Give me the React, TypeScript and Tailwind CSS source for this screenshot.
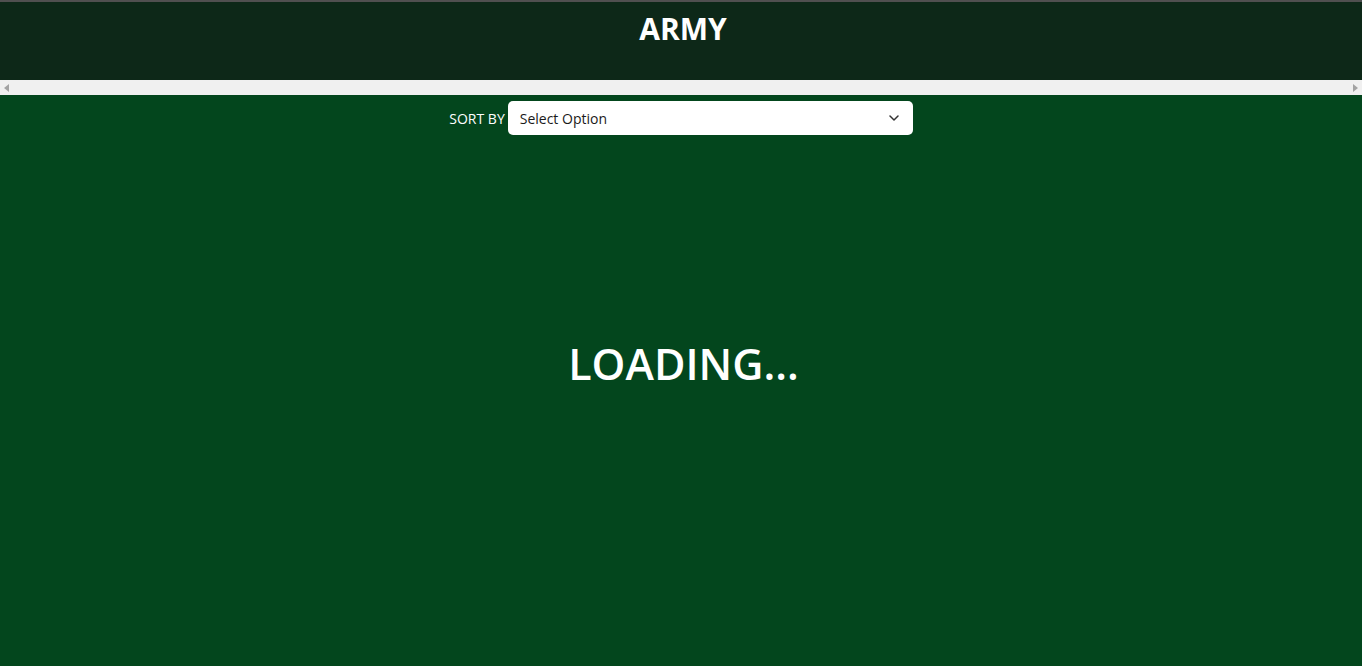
import React from "react";

export default function App() {
  return (
    <div
      className="w-[1362px] h-[666px] overflow-hidden flex flex-col bg-[#03461d]"
      style={{ fontFamily: '"Open Sans", "Noto Sans", sans-serif' }}
    >
      <div className="h-[2px] bg-[#505050]" />
      <header className="h-[78px] bg-[#0d2818] flex justify-center">
        <h1 className="text-[30px] font-bold text-white leading-none pt-[12px] pl-[4px]">ARMY</h1>
      </header>
      <div className="h-[15px] bg-[#f0f0f0] flex items-center justify-between px-[4px]">
        <svg width="5" height="8" viewBox="0 0 5 8">
          <polygon points="5,0 5,8 0,4" fill="#a3a3a3" />
        </svg>
        <svg width="5" height="8" viewBox="0 0 5 8">
          <polygon points="0,0 0,8 5,4" fill="#a3a3a3" />
        </svg>
      </div>
      <div className="flex justify-center items-center pt-[6px]">
        <span className="text-white text-[14px] mr-[3px]">SORT BY</span>
        <div className="w-[405px] h-[34px] bg-white rounded-[5px] flex items-center justify-between pl-[12px] pr-[14px]">
          <span className="text-[14px] text-[#1a1a1a]">Select Option</span>
          <svg width="10" height="6" viewBox="0 0 10 6" fill="none">
            <path d="M1 1l4 4 4-4" stroke="#333" strokeWidth="1.5" strokeLinecap="round" strokeLinejoin="round" />
          </svg>
        </div>
      </div>
      <div className="flex justify-center pt-[207px] pl-[5px]">
        <span className="text-white text-[43px] font-semibold leading-none">LOADING...</span>
      </div>
    </div>
  );
}
